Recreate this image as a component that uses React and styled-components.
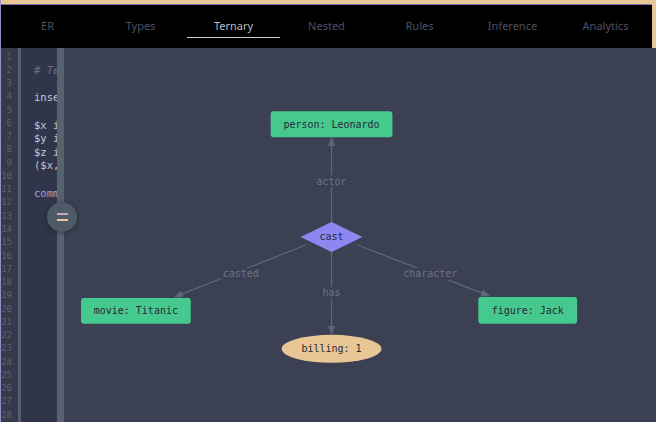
import React from 'react';
import styled, { createGlobalStyle } from 'styled-components';

const GlobalStyle = createGlobalStyle`
  html, body {
    margin: 0;
    padding: 0;
    background: #e8c795;
  }
  body {
    font-family: "Noto Sans", "DejaVu Sans", sans-serif;
  }
`;

const tabs = ['ER', 'Types', 'Ternary', 'Nested', 'Rules', 'Inference', 'Analytics'];

const code = [
  { text: '' },
  { text: '# Ternary relation', kind: 'comment' },
  { text: '' },
  { text: 'insert', kind: 'keyword' },
  { text: '' },
  { text: '$x isa person, has name "Leonardo";' },
  { text: '$y isa movie, has title "Titanic";' },
  { text: '$z isa figure, has name "Jack";' },
  { text: '($x, $y, $z) isa cast, has billing 1;' },
  { text: '' },
  { text: 'commit', kind: 'commit' },
];

const Page = styled.div`
  height: 422px;
  display: flex;
  flex-direction: column;
  overflow: hidden;
  border-left: 1px solid #9a8fc8;
  box-sizing: border-box;
`;

const Nav = styled.nav`
  margin: 4px 4px 0 0;
  height: 44px;
  background: #000;
  display: grid;
  grid-template-columns: repeat(7, 1fr);
  border-top: 1px solid #7d74b8;
  box-sizing: border-box;
`;

const Tab = styled.div`
  position: relative;
  display: flex;
  align-items: center;
  justify-content: center;
  padding-bottom: 2px;
  font-size: 11px;
  color: ${({ active }) => (active ? '#b9bccb' : '#4b5064')};

  &::after {
    content: '';
    display: ${({ active }) => (active ? 'block' : 'none')};
    position: absolute;
    left: 0;
    right: 0;
    bottom: 10px;
    height: 1px;
    background: #c9c6da;
  }
`;

const Main = styled.main`
  flex: 1;
  display: flex;
  background: #3b4053;
  position: relative;
`;

const Editor = styled.div`
  display: flex;
  width: 64px;
  flex-shrink: 0;
  position: relative;
`;

const Gutter = styled.div`
  width: 17px;
  background: #353a4b;
  border-right: 3px solid #566170;
  padding-top: 3px;
  font-family: "DejaVu Sans Mono", monospace;
  font-size: 9px;
  line-height: 13.26px;
  color: #59607a;
  text-align: right;
  box-sizing: content-box;
`;

const LineNo = styled.div`
  padding-right: 6px;
`;

const Code = styled.div`
  width: 36px;
  overflow: hidden;
  background: #30354a;
  padding-top: 3px;
  font-family: "DejaVu Sans Mono", monospace;
  font-size: 10.5px;
  line-height: 13.6px;
  white-space: pre;
`;

const CodeLine = styled.div`
  height: 13.6px;
  padding-left: 13px;
  color: ${({ kind }) =>
    kind === 'comment' ? '#6a7188' : kind === 'commit' ? '#a6a3d6' : '#c4c7d8'};
  font-style: ${({ kind }) => (kind === 'comment' ? 'italic' : 'normal')};
`;

const Slider = styled.div`
  width: 7px;
  background: #56636f;
`;

const Handle = styled.div`
  position: absolute;
  left: 46px;
  top: 154px;
  width: 30px;
  height: 30px;
  border-radius: 50%;
  background: #4e5a66;
  display: flex;
  flex-direction: column;
  align-items: center;
  justify-content: center;
  gap: 4px;
  box-shadow: 0 1px 4px rgba(20, 22, 32, 0.5);
`;

const Grip = styled.span`
  width: 11px;
  height: 2px;
  background: ${({ top }) => (top ? '#c7a7c8' : '#e8c795')};
`;

const Graph = styled.svg`
  flex: 1;
  display: block;
  font-family: "DejaVu Sans Mono", monospace;
`;

const EDGE = '#5d6778';

const Edge = ({ x1, y1, x2, y2 }) => (
  <line x1={x1} y1={y1} x2={x2} y2={y2} stroke={EDGE} strokeWidth="1.3" markerEnd="url(#arrow)" />
);

const EdgeLabel = ({ x, y, children }) => (
  <text x={x} y={y} textAnchor="middle" dominantBaseline="central" fontSize="10" fill="#6c7487">
    {children}
  </text>
);

const NodeText = ({ x, y, children }) => (
  <text x={x} y={y} textAnchor="middle" dominantBaseline="central" fontSize="10" fill="#262b39">
    {children}
  </text>
);

const Entity = ({ x, y, w, h, label }) => (
  <g>
    <rect x={x} y={y} width={w} height={h} rx="3" fill="#45c98e" />
    <NodeText x={x + w / 2} y={y + h / 2}>{label}</NodeText>
  </g>
);

const LabelBg = ({ x, y, w }) => <rect x={x - w / 2} y={y - 6} width={w} height={12} fill="#3b4053" />;

export default function App() {
  return (
    <Page>
      <GlobalStyle />
      <Nav>
        {tabs.map((t) => (
          <Tab key={t} active={t === 'Ternary'}>
            {t}
          </Tab>
        ))}
      </Nav>
      <Main>
        <Editor>
          <Gutter>
            {Array.from({ length: 28 }, (_, i) => (
              <LineNo key={i}>{i + 1}</LineNo>
            ))}
          </Gutter>
          <Code>
            {code.map((l, i) => (
              <CodeLine key={i} kind={l.kind}>
                {l.text}
              </CodeLine>
            ))}
          </Code>
          <Slider />
          <Handle>
            <Grip top />
            <Grip />
          </Handle>
        </Editor>
        <Graph viewBox="0 0 592 374" width="592" height="374">
          <defs>
            <marker id="arrow" viewBox="0 0 10 10" refX="9" refY="5" markerWidth="7" markerHeight="7" orient="auto">
              <path d="M0,1 L10,5 L0,9 z" fill={EDGE} />
            </marker>
          </defs>

          <Edge x1={267} y1={174} x2={267} y2={90} />
          <Edge x1={241} y1={197} x2={110} y2={249} />
          <Edge x1={293} y1={197} x2={425} y2={248} />
          <Edge x1={267} y1={204} x2={267} y2={286} />

          <LabelBg x={267} y={133} w={32} />
          <EdgeLabel x={267} y={133}>actor</EdgeLabel>
          <LabelBg x={176} y={226} w={40} />
          <EdgeLabel x={176} y={226}>casted</EdgeLabel>
          <LabelBg x={267} y={245} w={22} />
          <EdgeLabel x={267} y={245}>has</EdgeLabel>
          <LabelBg x={366} y={226} w={58} />
          <EdgeLabel x={366} y={226}>character</EdgeLabel>

          <Entity x={206} y={63} w={122} h={26} label="person: Leonardo" />
          <Entity x={16} y={250} w={110} h={26} label="movie: Titanic" />
          <Entity x={414} y={249} w={99} h={27} label="figure: Jack" />

          <polygon points="267,174 298,189 267,204 236,189" fill="#8d87f2" />
          <NodeText x={267} y={189}>cast</NodeText>

          <ellipse cx={267} cy={301} rx={50} ry={14} fill="#e8c795" />
          <NodeText x={267} y={301}>billing: 1</NodeText>
        </Graph>
      </Main>
    </Page>
  );
}
